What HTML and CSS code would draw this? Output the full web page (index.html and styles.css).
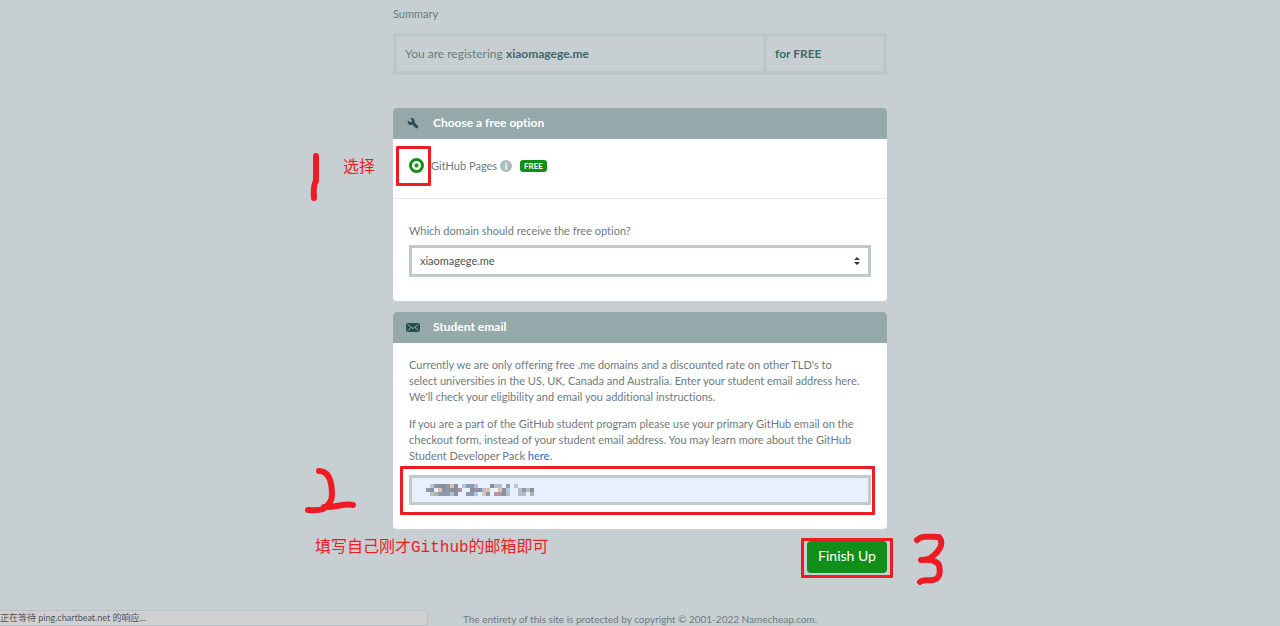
FILE: index.html
```html
<!DOCTYPE html>
<html lang="en">
<head>
  <meta charset="UTF-8">
  <meta name="viewport" content="width=device-width, initial-scale=1">
  <title>Student domain checkout</title>
  <link rel="stylesheet" href="styles.css">
</head>
<body>

  <main class="page">
    <h1 class="summary-title">Summary</h1>
    <table class="summary">
      <tr>
        <td>You are registering <strong>xiaomagege.me</strong></td>
        <td class="price"><strong>for FREE</strong></td>
      </tr>
    </table>

    <form>
      <section class="panel">
        <h2 class="panel-head">
          <svg class="icon" viewBox="0 0 14 14" aria-hidden="true">
            <path d="M4.2 2.2 A3.3 3.3 0 0 1 8.4 6.6 L11.8 9.8 A1.4 1.4 0 0 1 9.8 11.9 L6.4 8.6 A3.3 3.3 0 0 1 1.8 4.6 L4 6.3 L5.8 5.8 L6 4.2 Z"/>
          </svg>
          Choose a free option
        </h2>
        <div class="option">
          <span class="marked mark-radio"><input type="radio" id="github" name="option" checked></span>
          <label for="github">GitHub Pages</label>
          <span class="info">i</span>
          <span class="badge">FREE</span>
        </div>
        <div class="domain">
          <label for="domain">Which domain should receive the free option?</label>
          <div class="select">
            <select id="domain"><option>xiaomagege.me</option></select>
            <svg class="arrows" viewBox="0 0 6 8" aria-hidden="true"><path d="M3 0 L6 3 H0 Z M0 5 H6 L3 8 Z"/></svg>
          </div>
        </div>
      </section>

      <section class="panel">
        <h2 class="panel-head">
          <svg class="icon" viewBox="0 0 14 14" aria-hidden="true">
            <rect x="0" y="3" width="14" height="9" rx="2"/>
            <path class="fold" d="M1.5 4.5 L7 8.5 L12.5 4.5 M1.5 10.8 L5 7.5 M12.5 10.8 L9 7.5"/>
          </svg>
          Student email
        </h2>
        <div class="email">
          <p>Currently we are only offering free .me domains and a discounted rate on other TLD's to select universities in the US, UK, Canada and Australia. Enter your student email address here. We'll check your eligibility and email you additional instructions.</p>
          <p>If you are a part of the GitHub student program please use your primary GitHub email on the checkout form, instead of your student email address. You may learn more about the GitHub Student Developer Pack <a href="#">here</a>.</p>
          <div class="marked mark-email">
            <input type="email" aria-label="Student email">
            <!-- address is pixelated -->
            <svg class="mosaic" viewBox="0 0 112 12" aria-hidden="true">
              <g fill="#8f99aa">
                <path d="M0 4h4v4h-4z M8 0h4v4h-4z M12 8h8v4h-8z M20 0h4v12h-4z M28 4h4v4h-4z M40 0h8v4h-8z M40 8h8v4h-8z M48 4h4v4h-4z M60 8h4v4h-4z M80 0h4v4h-4z M96 4h4v4h-4z"/>
              </g>
              <g fill="#8b8f9c">
                <path d="M4 4h4v4h-4z M12 0h8v4h-8z M16 4h4v4h-4z M24 4h4v4h-4z M28 0h4v12h-4z M44 4h4v4h-4z M52 4h4v4h-4z M64 0h4v4h-4z M76 4h4v8h-4z M104 4h4v4h-4z"/>
              </g>
              <g fill="#b7bdca">
                <path d="M4 8h4v4h-4z M24 8h4v4h-4z M48 0h4v4h-4z M56 4h4v4h-4z M68 0h4v4h-4z M72 0h4v4h-4z M80 8h4v4h-4z M92 4h4v4h-4z M92 8h8v4h-8z M100 4h4v4h-4z"/>
              </g>
              <path fill="#a9c9ee" d="M4 0h4v4h-4z M36 0h4v4h-4z M48 8h4v4h-4z M80 4h4v4h-4z M88 0h4v4h-4z"/>
              <path fill="#dcc3a8" d="M12 4h4v4h-4z M24 0h4v4h-4z M56 8h4v4h-4z M60 4h4v4h-4z M72 4h4v4h-4z"/>
              <path fill="#b294a8" d="M68 8h8v4h-8z M32 4h4v4h-4z"/>
              <path fill="#a5b9a8" d="M8 8h4v4h-4z M104 8h4v4h-4z"/>
            </svg>
          </div>
        </div>
      </section>

      <div class="actions">
        <span class="marked mark-button"><button type="submit">Finish Up</button></span>
      </div>
    </form>

    <!-- tutorial steps -->
    <svg class="step step-1" viewBox="0 0 10 50" aria-hidden="true"><path d="M7 4 V29 Q4 33 5 46"/></svg>
    <span class="note note-1" lang="zh">选择</span>
    <svg class="step step-2" viewBox="0 0 52 48" aria-hidden="true"><path d="M15 4 C25 4 28 14 28 28 C28 34 24 39 19 42 C14 44 10 43 4 43 M20 40 C32 41 38 36 49 38"/></svg>
    <span class="note note-2" lang="zh">填写自己刚才Github的邮箱即可</span>
    <svg class="step step-3" viewBox="0 0 32 54" aria-hidden="true"><path d="M4 8 C10 3 17 5 26 5 C32 12 25 20 20 24 C15 28 12 28 8 28 C16 27 23 28 26 33 C28 42 26 47 20 48 C15 49 10 47 7 50"/></svg>
  </main>

  <footer>The entirety of this site is protected by copyright © 2001-2022 Namecheap.com.</footer>
  <div class="status" lang="zh">正在等待 ping.chartbeat.net 的响应...</div>

</body>
</html>
```
FILE: styles.css
```css
* {
  box-sizing: border-box;
}

body {
  margin: 0;
  background: #c7cfd2;
  color: #6d7b7e;
  font-family: Lato, "Noto Sans CJK SC", sans-serif;
  font-size: 11px;
  font-variant-ligatures: none;
  line-height: 16px;
}

.page {
  position: relative;
  max-width: 494px;
  margin: 0 auto;
  padding-top: 6px;
}

.summary-title {
  margin: 0 0 11px;
  font-size: 11px;
  font-weight: normal;
}

.summary {
  width: 100%;
  margin-bottom: 33px;
  border-collapse: collapse;
  font-size: 12px;
}

.summary td {
  height: 38px;
  padding: 0 8px;
  border: 4px solid #bbc7c9;
}

.summary .price {
  width: 120px;
}

.summary strong {
  color: #40686f;
}

.panel {
  margin-bottom: 11px;
  background: #fff;
  border-radius: 4px;
  overflow: hidden;
}

.panel-head {
  display: flex;
  align-items: center;
  gap: 13px;
  height: 31px;
  margin: 0;
  padding: 0 13px 2px;
  background: #95a8aa;
  color: #fff;
  font-size: 12px;
}

.icon {
  width: 14px;
  height: 14px;
  fill: #274b53;
}

.icon .fold {
  fill: none;
  stroke: #95a8aa;
}

.option {
  display: flex;
  align-items: center;
  height: 60px;
  padding: 0 16px 6px;
  border-bottom: 1px solid #e6e9ea;
}

input[type="radio"] {
  appearance: none;
  display: block;
  width: 15px;
  height: 15px;
  margin: 0;
  border: 3px solid #118f18;
  border-radius: 50%;
  background: radial-gradient(circle, #118f18 1px, #fff 3px);
}

.option label {
  margin-left: 7px;
}

.info {
  width: 12px;
  height: 12px;
  margin: 0 8px 0 3px;
  border-radius: 50%;
  background: #aebbbd;
  color: #fff;
  font-size: 10px;
  font-weight: bold;
  line-height: 12px;
  text-align: center;
}

.badge {
  padding: 0 4px;
  border-radius: 3px;
  background: #118f18;
  color: #fff;
  font-size: 8px;
  font-weight: bold;
  line-height: 12px;
}

.domain {
  padding: 24px 16px;
}

.domain label {
  display: block;
  margin-bottom: 6px;
}

.select {
  position: relative;
}

select,
input[type="email"] {
  display: block;
  width: 100%;
  border: 3px solid #c1caca;
  border-radius: 0;
  font: inherit;
}

select {
  appearance: none;
  height: 32px;
  padding: 0 8px;
  background: #fff;
  color: #4b5558;
}

.arrows {
  position: absolute;
  top: 12px;
  right: 11px;
  width: 6px;
  height: 8px;
  fill: #333;
}

.email {
  padding: 14px 16px 24px;
}

.email p {
  margin: 0 0 11px;
  padding-right: 10px;
}

a {
  color: #1d6fd0;
  text-decoration: none;
}

input[type="email"] {
  height: 30px;
  padding: 0 14px;
  background: #e8f0fe;
}

.mosaic {
  position: absolute;
  top: 9px;
  left: 17px;
  width: 112px;
  height: 12px;
}

.actions {
  display: flex;
  justify-content: flex-end;
  padding-top: 1px;
}

button {
  display: block;
  width: 80px;
  height: 32px;
  padding: 0 0 3px;
  border: 0;
  border-radius: 4px;
  background: #118f18;
  color: #fff;
  font: 14px Lato, sans-serif;
}

footer {
  margin-top: 39px;
  text-align: center;
  font-size: 10px;
  line-height: 14px;
}

.status {
  position: fixed;
  left: 0;
  bottom: 0;
  width: 428px;
  height: 16px;
  border: 1px solid #b9c0c2;
  border-left: 0;
  border-top-right-radius: 4px;
  background: #d0d0d0;
  color: #50545c;
  font-size: 9px;
  line-height: 14px;
}

/* red marker */
.marked {
  position: relative;
}

.marked::after {
  content: "";
  position: absolute;
  border: 3px solid #ed1c24;
  border-radius: 1px;
  pointer-events: none;
}

.mark-radio::after {
  inset: -12px -7px -13px -13px;
}

.mark-email::after {
  inset: -9px -4px -10px -9px;
}

.mark-button::after {
  inset: -3px -6px -5px -6px;
}

.step {
  position: absolute;
  fill: none;
  stroke: #ed1c24;
  stroke-width: 6px;
  stroke-linecap: round;
  stroke-linejoin: round;
}

.step-1 {
  top: 152px;
  left: -84px;
  width: 10px;
  height: 50px;
}

.step-2 {
  top: 467px;
  left: -89px;
  width: 52px;
  height: 48px;
}

.step-3 {
  top: 532px;
  right: -58px;
  width: 32px;
  height: 54px;
}

.note {
  position: absolute;
  color: #ed1c24;
  font: 16px/20px "Liberation Mono", "Noto Sans CJK SC", monospace;
  white-space: nowrap;
}

.note-1 {
  top: 158px;
  left: -50px;
}

.note-2 {
  top: 538px;
  left: -78px;
}
```
